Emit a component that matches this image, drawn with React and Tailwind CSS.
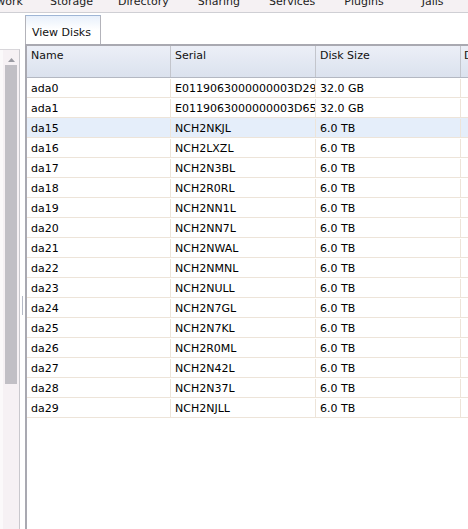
import React from "react";

const rows = [
  ["ada0", "E0119063000000003D29", "32.0 GB"],
  ["ada1", "E0119063000000003D65", "32.0 GB"],
  ["da15", "NCH2NKJL", "6.0 TB"],
  ["da16", "NCH2LXZL", "6.0 TB"],
  ["da17", "NCH2N3BL", "6.0 TB"],
  ["da18", "NCH2R0RL", "6.0 TB"],
  ["da19", "NCH2NN1L", "6.0 TB"],
  ["da20", "NCH2NN7L", "6.0 TB"],
  ["da21", "NCH2NWAL", "6.0 TB"],
  ["da22", "NCH2NMNL", "6.0 TB"],
  ["da23", "NCH2NULL", "6.0 TB"],
  ["da24", "NCH2N7GL", "6.0 TB"],
  ["da25", "NCH2N7KL", "6.0 TB"],
  ["da26", "NCH2R0ML", "6.0 TB"],
  ["da27", "NCH2N42L", "6.0 TB"],
  ["da28", "NCH2N37L", "6.0 TB"],
  ["da29", "NCH2NJLL", "6.0 TB"],
];

export default function App() {
  return (
    <div
      className="w-[468px] h-[529px] overflow-hidden bg-white text-black flex flex-col"
      style={{ fontFamily: '"DejaVu Sans", Verdana, sans-serif' }}
    >
      {/* top nav */}
      <div className="h-[13px] shrink-0 overflow-hidden bg-[#f5f1f3] border-b border-[#cfcfd4]">
        <div className="flex mt-[-5px] text-[11px] leading-[13px] text-[#222] whitespace-nowrap">
          <span className="ml-[-23px]">Network</span>
          <span className="ml-[27px]">Storage</span>
          <span className="ml-[25px]">Directory</span>
          <span className="ml-[29px]">Sharing</span>
          <span className="ml-[29px]">Services</span>
          <span className="ml-[29px]">Plugins</span>
          <span className="ml-[38px]">Jails</span>
        </div>
      </div>

      <div className="flex flex-1 min-h-0">
        {/* left collapsed panel */}
        <div className="w-[20px] shrink-0 pt-[36px] flex flex-col">
          <div className="flex-1 flex">
            <div className="w-[3px] bg-[#fbf9fa] border-t border-[#d8d6da]" />
            <div className="flex-1 bg-[#f6f1f4] border-t border-[#d8d6da] border-r border-r-[#c9c8cd] flex flex-col items-center pt-[8px]">
              <div className="w-[12px] flex flex-col items-center">
                <svg width="7" height="4" viewBox="0 0 7 4" className="mb-[3px]">
                  <path d="M0 4 L3.5 0 L7 4 Z" fill="#9a9aa2" />
                </svg>
                <div className="w-[12px] h-[319px] bg-[#c1bfc5]" />
              </div>
            </div>
          </div>
        </div>

        {/* splitter */}
        <div className="w-[5px] shrink-0 flex flex-col items-center pt-[283px]">
          <div className="w-[1px] h-[19px] bg-[#b5bac6] ml-[-1px]" />
        </div>

        {/* main area */}
        <div className="flex-1 min-w-0 flex flex-col">
          {/* tab strip */}
          <div className="h-[31px] pt-[2px] shrink-0 flex">
            <div className="w-[76px] h-[29px] border border-b-0 border-[#b3b3ba] border-t-[#9fb6d6] bg-gradient-to-b from-[#e8f0fb] via-white to-white text-[11px] flex items-center pl-[6px] pt-[6px] text-[#111]">
              View Disks
            </div>
          </div>

          {/* grid */}
          <div className="flex-1 border-l-2 border-[#a9a9b1] flex flex-col min-h-0">
            <div className="h-[34px] shrink-0 border-t-2 border-[#a9a9b1] border-b border-b-[#b4b8c2] bg-gradient-to-b from-[#eceff7] to-[#dbe2ee] flex text-[11px] text-[#111]">
              <div className="w-[144px] shrink-0 border-r border-[#c3c5cc] pl-[4px] pt-[2px]">Name</div>
              <div className="w-[145px] shrink-0 border-r border-[#c3c5cc] pl-[4px] pt-[2px]">Serial</div>
              <div className="w-[145px] shrink-0 border-r border-[#c3c5cc] pl-[4px] pt-[2px]">Disk Size</div>
              <div className="flex-1 pl-[3px] pt-[2px] whitespace-nowrap overflow-hidden">Description</div>
            </div>
            {rows.map((r, i) => (
              <div
                key={r[0]}
                className={
                  "h-[20px] shrink-0 flex text-[11px] leading-[19px] pt-[1px] border-b border-[#ede4d9] " +
                  (i === 2 ? "bg-[#e5eefa]" : "bg-white")
                }
              >
                <div className="w-[144px] shrink-0 border-r border-[#ede4d9] pl-[4px] whitespace-nowrap overflow-hidden">
                  {r[0]}
                </div>
                <div className="w-[145px] shrink-0 border-r border-[#ede4d9] pl-[4px] whitespace-nowrap overflow-hidden">
                  {r[1]}
                </div>
                <div className="w-[145px] shrink-0 border-r border-[#ede4d9] pl-[4px] whitespace-nowrap overflow-hidden">
                  {r[2]}
                </div>
                <div className="flex-1" />
              </div>
            ))}
          </div>
        </div>
      </div>
    </div>
  );
}
